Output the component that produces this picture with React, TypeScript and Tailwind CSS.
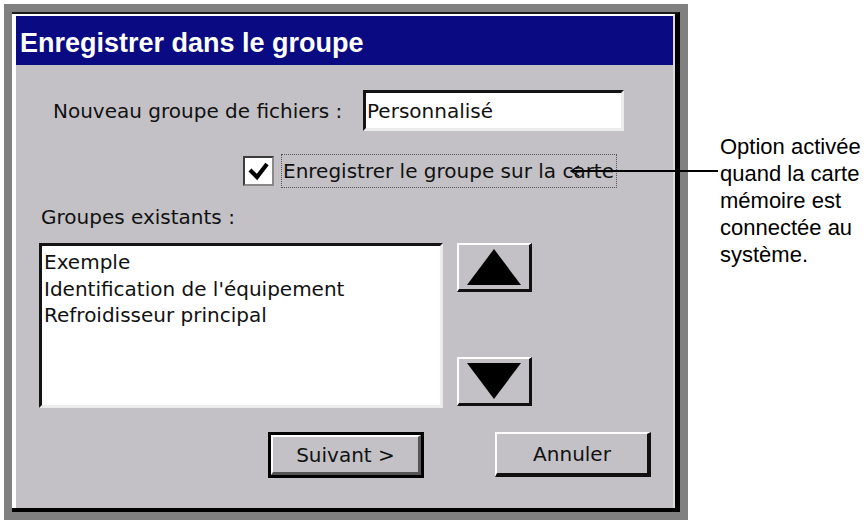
import React from "react";

const raised =
  "border-t-2 border-l-2 border-t-white border-l-white border-r-[3px] border-b-[3px] border-r-[#111] border-b-[#111] bg-[#c3c1c5]";
const sunken =
  "border-[3px] border-t-[#141414] border-l-[#141414] border-r-[#ececec] border-b-[#ececec] bg-white";

function ArrowButton({ dir }: { dir: "up" | "down" }) {
  return (
    <div className={`w-[75px] h-[49px] flex items-center justify-center ${raised}`}>
      <svg width="54" height="36" viewBox="0 0 54 36">
        {dir === "up" ? (
          <polygon points="27,0 54,36 0,36" fill="#000" />
        ) : (
          <polygon points="0,0 54,0 27,36" fill="#000" />
        )}
      </svg>
    </div>
  );
}

export default function App() {
  const groups = ["Exemple", "Identification de l'équipement", "Refroidisseur principal"];

  return (
    <div className="relative w-[868px] h-[520px] bg-white flex overflow-hidden">
      {/* grey frame around the dialog */}
      <div className="ml-[4px] mt-[4px] p-[8px] bg-[#808080] self-start">
        <div className="w-[668px] h-[500px] border-t-2 border-t-[#1a1a1a] border-r-[5px] border-r-black border-b-[4px] border-b-black">
          <div className="h-full flex flex-col border-t-2 border-l-[4px] border-t-white border-l-white border-r-2 border-r-[#dcdcdc]">
            {/* title bar */}
            <div className="h-[49px] shrink-0 bg-[#0a0a82] pl-[4px] pt-[6px] leading-[43px] text-white font-bold text-[27px] font-['Liberation_Sans',Arial,sans-serif] whitespace-nowrap">
              Enregistrer dans le groupe
            </div>

            {/* body */}
            <div className="flex-1 flex flex-col bg-[#c3c1c5] pt-[25px] text-[20px] text-[#111] font-['DejaVu_Sans',sans-serif]">
              <div className="flex items-center h-[41px]">
                <div className="w-[347px] pl-[37px] whitespace-nowrap">Nouveau groupe de fichiers :</div>
                <div className={`w-[261px] h-[41px] flex items-center pl-[1px] whitespace-nowrap ${sunken}`}>
                  Personnalisé
                </div>
              </div>

              <div className="flex items-center gap-[7px] h-[34px] mt-[23px] pl-[227px]">
                <div className="w-[31px] h-[30px] bg-white border-[2px] border-t-[#3c3c3c] border-l-[#3c3c3c] border-r-[#8a8a8a] border-b-[#8a8a8a] flex">
                  <svg width="27" height="26" viewBox="0 0 27 26">
                    <polyline points="5,12 12,19 22,6" fill="none" stroke="#000" strokeWidth="4.2" />
                  </svg>
                </div>
                <div className="w-[336px] h-[34px] flex items-center pl-[1px] border border-dotted border-[#555] whitespace-nowrap">
                  Enregistrer le groupe sur la carte
                </div>
              </div>

              <div className="mt-[18px] pl-[25px] leading-[23px] whitespace-nowrap">Groupes existants :</div>

              <div className="flex mt-[14px] pl-[23px] gap-[14px]">
                <div className={`w-[404px] h-[165px] pt-[3px] pl-[2px] leading-[26.67px] ${sunken}`}>
                  {groups.map((g) => (
                    <div key={g} className="whitespace-nowrap">{g}</div>
                  ))}
                </div>
                <div className="h-[163px] flex flex-col justify-between">
                  <ArrowButton dir="up" />
                  <ArrowButton dir="down" />
                </div>
              </div>

              <div className="flex items-start mt-[24px] pl-[252px] gap-[71px]">
                <div className="w-[156px] h-[46px] border-[3px] border-black flex">
                  <div className={`flex-1 flex items-center justify-center ${raised} border-r-2 border-b-2 border-r-[#555] border-b-[#555]`}>
                    Suivant &gt;
                  </div>
                </div>
                <div className={`w-[156px] h-[45px] flex items-center justify-center ${raised} border-r-[4px] border-b-[4px]`}>
                  Annuler
                </div>
              </div>
            </div>
          </div>
        </div>
      </div>

      {/* callout text */}
      <div className="ml-[32px] mt-[133px] text-[22px] leading-[27px] text-black font-['Liberation_Sans',Arial,sans-serif] whitespace-nowrap">
        <div>Option activée</div>
        <div>quand la carte</div>
        <div>mémoire est</div>
        <div>connectée au</div>
        <div>système.</div>
      </div>

      {/* callout leader line */}
      <div className="absolute left-[572px] top-[170px] w-[146px] h-[2px] bg-black" />
      <svg className="absolute left-[569px] top-[164px]" width="12" height="14" viewBox="0 0 12 14">
        <polyline points="10,2 2,7 10,12" fill="none" stroke="#000" strokeWidth="1.4" />
      </svg>
    </div>
  );
}
